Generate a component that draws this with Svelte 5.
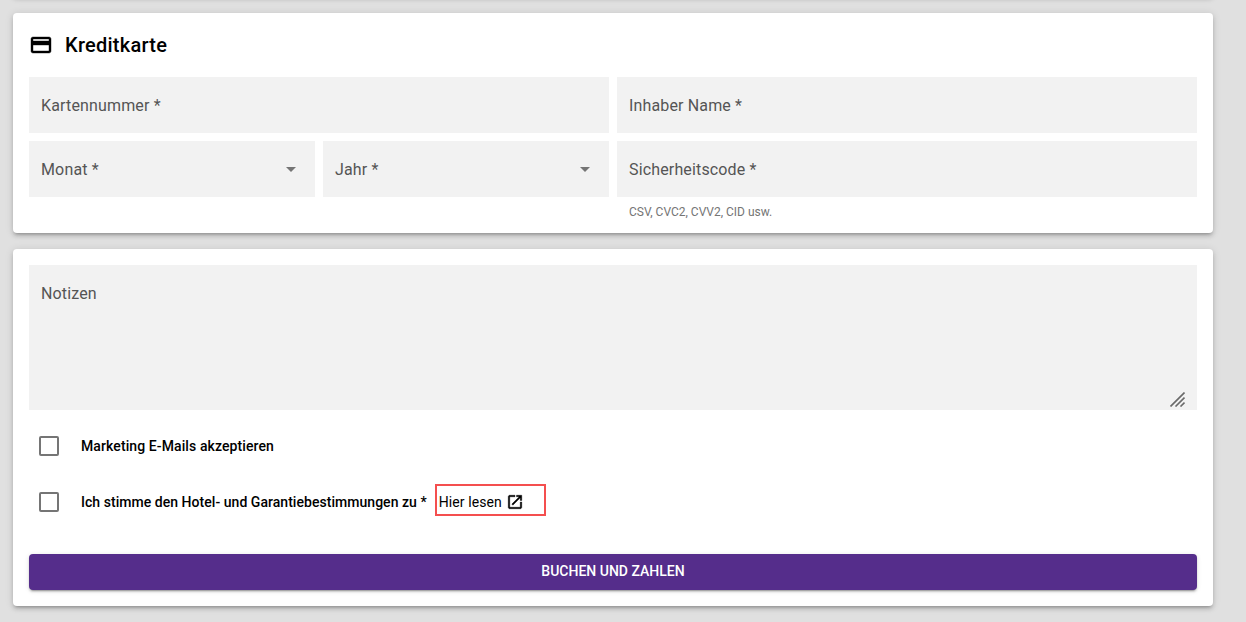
<script>
  let notes = $state('');
</script>

<main class="page">
  <div class="prev-edge"></div>
  <section class="card">
    <h2 class="head">
      <svg class="card-icon" viewBox="0 0 24 24" width="24" height="24" aria-hidden="true">
        <path d="M20 4H4c-1.11 0-1.99.89-1.99 2L2 18c0 1.11.89 2 2 2h16c1.11 0 2-.89 2-2V6c0-1.11-.89-2-2-2zm0 14H4v-6h16v6zm0-10H4V6h16v2z"/>
      </svg>
      <span>Kreditkarte</span>
    </h2>
    <div class="grid">
      <input class="field" placeholder="Kartennummer *" />
      <input class="field" placeholder="Inhaber Name *" />
      <div class="pair">
        <div class="field select"><span>Monat *</span><i class="caret"></i></div>
        <div class="field select"><span>Jahr *</span><i class="caret"></i></div>
      </div>
      <div>
        <input class="field" placeholder="Sicherheitscode *" />
        <p class="hint">CSV, CVC2, CVV2, CID usw.</p>
      </div>
    </div>
  </section>

  <section class="card">
    <div class="notes-wrap">
      <textarea class="notes" placeholder="Notizen" bind:value={notes}></textarea>
      <svg class="grip" viewBox="0 0 15 15" width="15" height="15" aria-hidden="true">
        <path d="M0.5 14.5 14.5 0.5M5.5 14.5 14.5 5.5M10.5 14.5 14.5 10.5"/>
      </svg>
    </div>
    <label class="check">
      <input type="checkbox" />
      <span>Marketing E-Mails akzeptieren</span>
    </label>
    <div class="check">
      <input type="checkbox" />
      <span class="terms">Ich stimme den Hotel- und Garantiebestimmungen zu *</span>
      <a class="read" href="#terms">
        <span>Hier lesen</span>
        <svg viewBox="0 0 24 24" width="18" height="18" aria-hidden="true">
          <path d="M19 19H5V5h7V3H5c-1.11 0-2 .9-2 2v14c0 1.1.89 2 2 2h14c1.1 0 2-.9 2-2v-7h-2v7zM14 3v2h3.59l-9.83 9.83 1.41 1.41L19 6.41V10h2V3h-7z"/>
        </svg>
      </a>
    </div>
    <button class="pay" type="button">Buchen und zahlen</button>
  </section>
</main>

<style>
  :global(body) {
    margin: 0;
    background: #e0e0e0;
    font-family: Roboto, "Liberation Sans", sans-serif;
  }
  .page {
    position: relative;
    display: flex;
    flex-direction: column;
    gap: 16px;
    width: 1200px;
    padding: 13px 33px 16px 13px;
    overflow: hidden;
  }
  .prev-edge {
    position: absolute;
    top: -20px;
    left: 13px;
    width: 1200px;
    height: 16px;
    border-radius: 4px;
    box-shadow: 0 3px 3px -2px rgba(0,0,0,.2), 0 3px 4px 0 rgba(0,0,0,.14), 0 1px 8px 0 rgba(0,0,0,.12);
  }
  .card {
    background: #fff;
    border-radius: 4px;
    padding: 16px;
    box-shadow: 0 3px 3px -2px rgba(0,0,0,.2), 0 3px 4px 0 rgba(0,0,0,.14), 0 1px 8px 0 rgba(0,0,0,.12);
  }
  .head {
    display: flex;
    align-items: center;
    gap: 12px;
    height: 32px;
    margin: 0 0 16px;
    font-size: 20px;
    font-weight: 500;
    letter-spacing: .25px;
    color: #000;
  }
  .card-icon {
    display: block;
    stroke: #000;
    stroke-width: .4;
  }
  .grid {
    display: grid;
    grid-template-columns: 1fr 1fr;
    gap: 8px;
  }
  .pair {
    display: grid;
    grid-template-columns: 1fr 1fr;
    gap: 8px;
  }
  .field {
    display: block;
    box-sizing: border-box;
    width: 100%;
    height: 56px;
    padding: 0 12px;
    border: 0;
    outline: 0;
    background: #f2f2f2;
    font: 400 16px Roboto, sans-serif;
    letter-spacing: .15px;
    color: #555;
  }
  .field::placeholder, .notes::placeholder { color: #555; opacity: 1; }
  .select {
    display: flex;
    align-items: center;
    justify-content: space-between;
    padding-right: 19px;
  }
  .caret {
    width: 0;
    height: 0;
    border-left: 5px solid transparent;
    border-right: 5px solid transparent;
    border-top: 5px solid #757575;
  }
  .hint {
    height: 20px;
    margin: 0;
    padding: 9px 12px 0;
    box-sizing: border-box;
    font-size: 12px;
    line-height: 12px;
    color: #757575;
  }
  .notes-wrap {
    position: relative;
    margin-bottom: 8px;
  }
  .notes {
    display: block;
    box-sizing: border-box;
    width: 100%;
    height: 145px;
    padding: 21px 12px;
    border: 0;
    outline: 0;
    resize: none;
    background: #f2f2f2;
    font: 400 16px/16px Roboto, sans-serif;
    letter-spacing: .15px;
    color: #555;
  }
  .grip {
    position: absolute;
    right: 12px;
    bottom: 3px;
    fill: none;
    stroke: #6a6a6a;
    stroke-width: 1.6;
  }
  .check {
    display: flex;
    align-items: center;
    height: 56px;
    font-size: 14px;
    font-weight: 500;
    letter-spacing: .1px;
    color: #000;
  }
  .terms { letter-spacing: .04px; }
  .check input {
    appearance: none;
    box-sizing: border-box;
    width: 20px;
    height: 20px;
    margin: 0 22px 0 10px;
    border: 2px solid #757575;
    border-radius: 2px;
    background: #fff;
    flex: none;
  }
  .read {
    display: flex;
    align-items: center;
    gap: 4px;
    box-sizing: border-box;
    width: 111px;
    height: 32px;
    margin: 0 0 4px 8px;
    padding: 3px 2px 0;
    border: 2px solid #f44f4f;
    font-weight: 400;
    letter-spacing: .1px;
    color: #000;
    text-decoration: none;
  }
  .read svg {
    stroke: #000;
    stroke-width: .5;
  }
  .pay {
    display: block;
    width: 100%;
    height: 36px;
    margin-top: 24px;
    padding: 0 0 2px;
    border: 0;
    border-radius: 4px;
    background: #552d8b;
    color: #fff;
    font: 500 14px Roboto, sans-serif;
    text-transform: uppercase;
    box-shadow: 0 3px 1px -2px rgba(0,0,0,.2), 0 2px 2px 0 rgba(0,0,0,.14), 0 1px 5px 0 rgba(0,0,0,.12);
  }
</style>
